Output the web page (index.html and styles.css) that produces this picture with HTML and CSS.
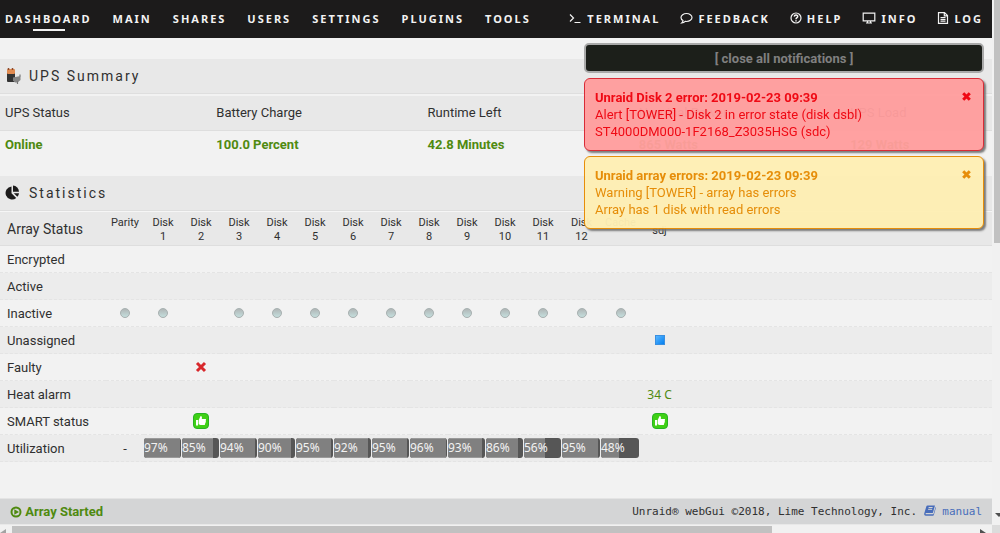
FILE: index.html
```html
<!DOCTYPE html>
<html lang="en">
<head>
    <meta charset="UTF-8">
    <title>Tower/Dashboard</title>
    <link rel="stylesheet" href="styles.css">
</head>
<body>
<div id="page">
    <nav id="menu">
        <div class="links">
            <a class="active" href="#">Dashboard</a>
            <a href="#">Main</a>
            <a href="#">Shares</a>
            <a href="#">Users</a>
            <a href="#">Settings</a>
            <a href="#">Plugins</a>
            <a href="#">Tools</a>
        </div>
        <div class="links right">
            <a href="#"><svg width="13" height="12" viewBox="0 0 13 12"><path d="M1 2.500l3.500 3.500L1 9.500M5.500 10.500h6"/></svg>Terminal</a>
            <a href="#"><svg width="13" height="12" viewBox="0 0 13 12"><path d="M6.500 1.500C3.500 1.500 1 3.300 1 5.500c0 1.300.8 2.400 2 3.100 0 1-.5 1.700-1.200 2.400 1.500-.2 2.600-.8 3.400-1.600.4.100.9.100 1.300.1 3 0 5.500-1.800 5.500-4S9.500 1.500 6.500 1.500z"/></svg>Feedback</a>
            <a href="#"><svg width="12" height="12" viewBox="0 0 12 12"><circle cx="6" cy="6" r="5"/><path d="M4.300 4.600C4.400 2.600 7.700 2.600 7.700 4.500 7.700 5.700 6 5.600 6 7.200M6 8.200v1.300" stroke-width="1.500"/></svg>Help</a>
            <a href="#"><svg width="14" height="12" viewBox="0 0 14 12"><path d="M1.200 1.200h11.600v7.600H1.200zM5.500 9v2M8.500 9v2M4 11h6"/></svg>Info</a>
            <a href="#"><svg width="12" height="12" viewBox="0 0 12 12"><path d="M1.500.600h6l3 3v7.800h-9zM7.300.600v3.200h3.200M3.500 5.500h5M3.500 7.300h5M3.500 9.200h5"/></svg>Log</a>
        </div>
    </nav>

    <main id="content">
        <h2 class="title">
            <svg width="16" height="16" viewBox="0 0 16 16">
                <rect x="2" y="2" width="8" height="12" rx="1" fill="#333"/>
                <rect x="2" y="1" width="8" height="5" rx="1" fill="#e08a50"/>
                <path d="M3.500 0v2M7.500 0v2" stroke="#8d4a2a" stroke-width="1.500"/>
                <path d="M8 9.500l7.500-1.500v4l-3 2.500H10l-2-2z" fill="#858585"/>
                <path d="M15 6.500v2M12.500 13v3" stroke="#777" stroke-width="1.200"/>
            </svg>
            UPS Summary
        </h2>
        <table class="ups">
            <thead>
            <tr><th>UPS Status</th><th>Battery Charge</th><th>Runtime Left</th><th>Nominal Power</th><th>UPS Load</th></tr>
            </thead>
            <tbody>
            <tr><td>Online</td><td>100.0 Percent</td><td>42.8 Minutes</td><td>865 Watts</td><td>129 Watts</td></tr>
            </tbody>
        </table>

        <h2 class="title">
            <svg width="16" height="16" viewBox="0 0 16 16">
                <path d="M6.500 1.500v6.800l4.700 4.700A6.500 6.500 0 1 1 6.500 1.500z" fill="#1c1b1b"/>
                <path d="M8 .500A6.500 6.500 0 0 1 14 6.800H8z" fill="#1c1b1b"/>
                <path d="M8.800 8.200H14a6 6 0 0 1-1.700 3.600z" fill="#1c1b1b"/>
            </svg>
            Statistics
        </h2>
        <table class="stats">
            <colgroup>
                <col class="label"><col span="12" class="disk"><col span="3" class="pool"><col>
            </colgroup>
            <thead>
            <tr id="disks"><th>Array Status</th></tr>
            </thead>
            <tbody id="rows"></tbody>
        </table>
    </main>

    <footer id="footer">
        <span class="state">
            <svg width="12" height="12" viewBox="0 0 12 12"><circle cx="6" cy="6" r="4.500"/><path d="M4.300 3.300L9 6 4.300 8.700z"/></svg>
            Array Started
        </span>
        <span class="copyright">Unraid® webGui ©2018, Lime Technology, Inc.
            <a href="#"><svg width="12" height="11" viewBox="0 0 12 11"><path d="M3.500.500H11L8.800 8H2.200c-.9 0-.9 1.300 0 1.300h7.200L11.600 2l.4.500-2.200 7.500c-.1.500-.4.700-.9.700H1.800C.5 10.700-.1 9.600.3 8.300L2.300 1.500C2.500.8 2.900.500 3.500.500z"/><path d="M4.600 2.500h4M4.100 4.300h4" stroke="#d4d5d6"/></svg> manual</a></span>
    </footer>
</div>

<div id="vscroll"><i class="thumb"></i><i class="down"></i></div>
<div id="hscroll"><i class="left"></i><i class="track"><i class="thumb"></i></i><i class="next"></i></div>
<div id="corner"></div>

<div id="notices">
    <button class="close-all" type="button">[ close all notifications ]</button>
    <div class="notice alert">
        <button type="button" aria-label="Close"><svg width="9" height="9" viewBox="0 0 9 9"><path d="M1.200 1.200l6.600 6.600M7.800 1.200L1.200 7.800"/></svg></button>
        <h3>Unraid Disk 2 error: 2019-02-23 09:39</h3>
        <p>Alert [TOWER] - Disk 2 in error state (disk dsbl)</p>
        <p>ST4000DM000-1F2168_Z3035HSG (sdc)</p>
    </div>
    <div class="notice warning">
        <button type="button" aria-label="Close"><svg width="9" height="9" viewBox="0 0 9 9"><path d="M1.200 1.200l6.600 6.600M7.800 1.200L1.200 7.800"/></svg></button>
        <h3>Unraid array errors: 2019-02-23 09:39</h3>
        <p>Warning [TOWER] - array has errors</p>
        <p>Array has 1 disk with read errors</p>
    </div>
</div>

<script>
    var disks = ['Parity'];
    for (var i = 1; i <= 12; i++) {
        disks.push('Disk<br>' + i);
    }
    disks.push('Cache', 'sdj', '');

    var ball = '<i class="ball"></i>';
    var thumb = '<svg class="thumb-up" width="16" height="16" viewBox="0 0 16 16"><rect x=".5" y=".5" width="15" height="15" rx="3.500"/>' +
        '<path d="M3 7h2v5.500H3zM5.600 7.200L7.600 3c1.300 0 1.600 1 1.200 3h3.700c.8 0 .8 1.200.1 1.400.6.300.5 1.300-.2 1.500.5.400.3 1.300-.4 1.500.3.600 0 1.600-.9 1.600H7.500l-1.900-.8z"/></svg>';
    var used = [97, 85, 94, 90, 95, 92, 95, 96, 93, 86, 56, 95, 48];

    var rows = [
        ['Encrypted', {}],
        ['Active', {}],
        ['Inactive', {}],
        ['Unassigned', {14: '<i class="square"></i>'}],
        ['Faulty', {2: '<svg class="cross" width="12" height="12" viewBox="0 0 12 12"><path d="M2 2l8 8M10 2l-8 8"/></svg>'}],
        ['Heat alarm', {14: '<span class="temp">34 C</span>'}],
        ['SMART status', {2: thumb, 14: thumb}],
        ['Utilization', {0: '-'}]
    ];
    for (i = 0; i < 14; i++) {
        if (i != 2) rows[2][1][i] = ball;
    }
    for (i = 0; i < used.length; i++) {
        rows[7][1][i + 1] = '<div class="bar"><span style="width:' + used[i] + '%">' + used[i] + '%</span></div>';
    }

    document.getElementById('disks').innerHTML += disks.map(function (d) {
        return '<th' + (d == 'sdj' ? ' class="device"' : '') + '>' + d + '</th>';
    }).join('');

    document.getElementById('rows').innerHTML = rows.map(function (row) {
        var html = '<tr><td>' + row[0] + '</td>';
        for (var c = 0; c < disks.length; c++) {
            html += '<td>' + (row[1][c] || '') + '</td>';
        }
        return html + '</tr>';
    }).join('');
</script>
</body>
</html>
```
FILE: styles.css
```css
*{
    box-sizing: border-box;
    margin: 0;
    padding: 0;
}
body{
    display: grid;
    grid-template-columns: 1fr 8px;
    grid-template-rows: 1fr 8px;
    height: 100vh;
    overflow: hidden;
    background: #f2f2f2;
    color: #303030;
    font: 13px/17px Roboto, "Noto Sans", sans-serif;
}
a{
    text-decoration: none;
}
button{
    border: 0;
    background: none;
    color: inherit;
    font: inherit;
    cursor: pointer;
}
#page{
    display: flex;
    flex-direction: column;
    min-width: 0;
    min-height: 0;
}

/* menu */
#menu{
    display: flex;
    justify-content: space-between;
    height: 38px;
    padding: 0 9px 0 5px;
    background: #1c1b1b;
}
.links{
    display: flex;
    gap: 21px;
}
.right{
    gap: 20px;
}
.links a{
    position: relative;
    display: flex;
    align-items: center;
    gap: 5px;
    height: 36px;
    color: #f2f2f2;
    font-family: "Noto Sans", sans-serif;
    font-size: 11px;
    font-weight: bold;
    letter-spacing: 2px;
    text-transform: uppercase;
}
.links .active:after{
    content: "";
    position: absolute;
    left: 32%;
    bottom: 5px;
    width: 32px;
    height: 2px;
    background: #f2f2f2;
}
.links svg{
    fill: none;
    stroke: #f2f2f2;
    stroke-width: 1.2;
}

/* tables */
#content{
    flex: 1;
    padding-top: 21px;
}
.title{
    display: flex;
    align-items: center;
    gap: 8px;
    height: 35px;
    padding-left: 5px;
    border-bottom: 1px solid #dedede;
    background: #e8e8e8;
    font-size: 14px;
    font-weight: normal;
    letter-spacing: 2px;
}
table{
    width: 100%;
    border-collapse: collapse;
    table-layout: fixed;
}
th{
    font-weight: normal;
    text-align: left;
}
.ups{
    margin-bottom: 18px;
}
.ups th{
    width: 21.3%;
    height: 35px;
    padding-left: 5px;
    border-top: 2px solid #f2f2f2;
    border-bottom: 1px solid #dedede;
    background: #e8e8e8;
}
.ups th:last-child{
    width: auto;
}
.ups td{
    height: 28px;
    padding-left: 5px;
    color: #4f8a10;
    font-weight: bold;
}
.stats .label{
    width: 106px;
}
.stats .disk{
    width: 38px;
}
.stats .pool{
    width: 39px;
}
.stats th{
    height: 34px;
    border-top: 1px solid #f6f6f6;
    border-bottom: 1px solid #dedede;
    background: #e8e8e8;
    font-size: 11px;
    line-height: 14px;
    text-align: center;
    vertical-align: top;
    padding-top: 4px;
}
.stats .device{
    vertical-align: middle;
}
.stats th:first-child{
    padding: 0 0 0 7px;
    font-size: 14px;
    text-align: left;
    vertical-align: middle;
}
.stats td{
    height: 27px;
    border-bottom: 1px dashed #e4e4e4;
    text-align: center;
}
.stats td:first-child{
    padding-left: 7px;
    text-align: left;
}
.stats tbody tr:nth-child(even){
    background: #ececec;
}
.stats td svg, .stats td i{
    display: block;
    margin: 0 auto;
}
.ball{
    width: 10px;
    height: 10px;
    border: 1px solid #a9b1b1;
    border-radius: 50%;
    background: linear-gradient(#b0b6b6, #c4dedd);
}
.square{
    width: 10px;
    height: 10px;
    border: 1px solid #3a8fe0;
    background: linear-gradient(135deg, #5ab6ff, #0480f0);
}
.cross path{
    stroke: #d8282c;
    stroke-width: 3;
}
.thumb-up rect{
    fill: #3fd015;
    stroke: #27b324;
}
.thumb-up path{
    fill: #fff;
}
.temp{
    color: #4f8a10;
    font-family: "Noto Sans", sans-serif;
    font-size: 12px;
}
.bar{
    height: 20px;
    margin-right: 1px;
    border-radius: 3px;
    background: #565656;
    overflow: hidden;
}
.bar span{
    display: block;
    height: 20px;
    border-top: 1px solid #9a9a9a;
    border-bottom: 1px solid #9a9a9a;
    background: #808080;
    color: #f2f2f2;
    font-family: "Noto Sans", sans-serif;
    font-size: 12px;
    line-height: 17px;
    text-align: left;
    white-space: nowrap;
}

/* footer */
#footer{
    display: flex;
    align-items: center;
    justify-content: space-between;
    height: 27px;
    padding: 0 10px;
    border-top: 1px solid #e4e4e4;
    border-bottom: 1px solid #e8e8e8;
    background: #d4d5d6;
}
.state{
    color: #4f8a10;
    font-weight: bold;
}
.state svg{
    vertical-align: -2px;
    fill: #4f8a10;
}
.state circle{
    fill: none;
    stroke: #4f8a10;
    stroke-width: 2;
}
.copyright{
    font-family: "DejaVu Sans Mono", monospace;
    font-size: 11px;
}
.copyright a{
    color: #486dba;
}
.copyright svg{
    fill: #486dba;
    vertical-align: -1px;
}

/* scrollbars */
#vscroll{
    display: flex;
    flex-direction: column;
    justify-content: space-between;
    padding: 0 0 8px 2px;
    background: #f1f1f1;
}
#vscroll .thumb{
    height: 47%;
    background: #c1c1c1;
}
#vscroll .down{
    margin-left: 1px;
    border: 4px solid transparent;
    border-width: 4px 4px 0;
    border-top-color: #505050;
}
#hscroll{
    display: flex;
    align-items: flex-end;
    gap: 6px;
    padding: 1px 6px 0 0;
    background: #f1f1f1;
}
#hscroll .track{
    flex: 1;
    height: 7px;
}
#hscroll .thumb{
    display: block;
    width: 79%;
    height: 7px;
    background: #c1c1c1;
}
#hscroll .left, #hscroll .next{
    width: 6px;
    border: 0 solid transparent;
    border-top-width: 4px;
}
#hscroll .left{
    border-right: 6px solid #a3a3a3;
}
#hscroll .next{
    border-left: 6px solid #505050;
}
#corner{
    background: #dcdcdc;
}

/* notifications */
#notices{
    position: fixed;
    top: 43px;
    right: 16px;
    width: 400px;
    display: flex;
    flex-direction: column;
    gap: 5px;
}
.close-all{
    height: 30px;
    border: 2px solid #a9a9a9;
    border-radius: 5px;
    background: #1c1f1a;
    color: #808080;
    font-weight: bold;
}
.notice{
    position: relative;
    padding: 10px;
    border: 1px solid;
    border-radius: 6px;
    box-shadow: 2px 2px 2px #777;
    opacity: .96;
}
.notice h3{
    font-size: 13px;
}
.notice button{
    position: absolute;
    top: 13px;
    right: 12px;
}
.notice svg{
    display: block;
    fill: none;
    stroke: currentColor;
    stroke-width: 3;
}
.alert{
    border-color: #d8242f;
    background: #ff9e9e;
    color: #f0000c;
}
.warning{
    border-color: #e68a00;
    background: #feefb3;
    color: #e68a00;
}
```
